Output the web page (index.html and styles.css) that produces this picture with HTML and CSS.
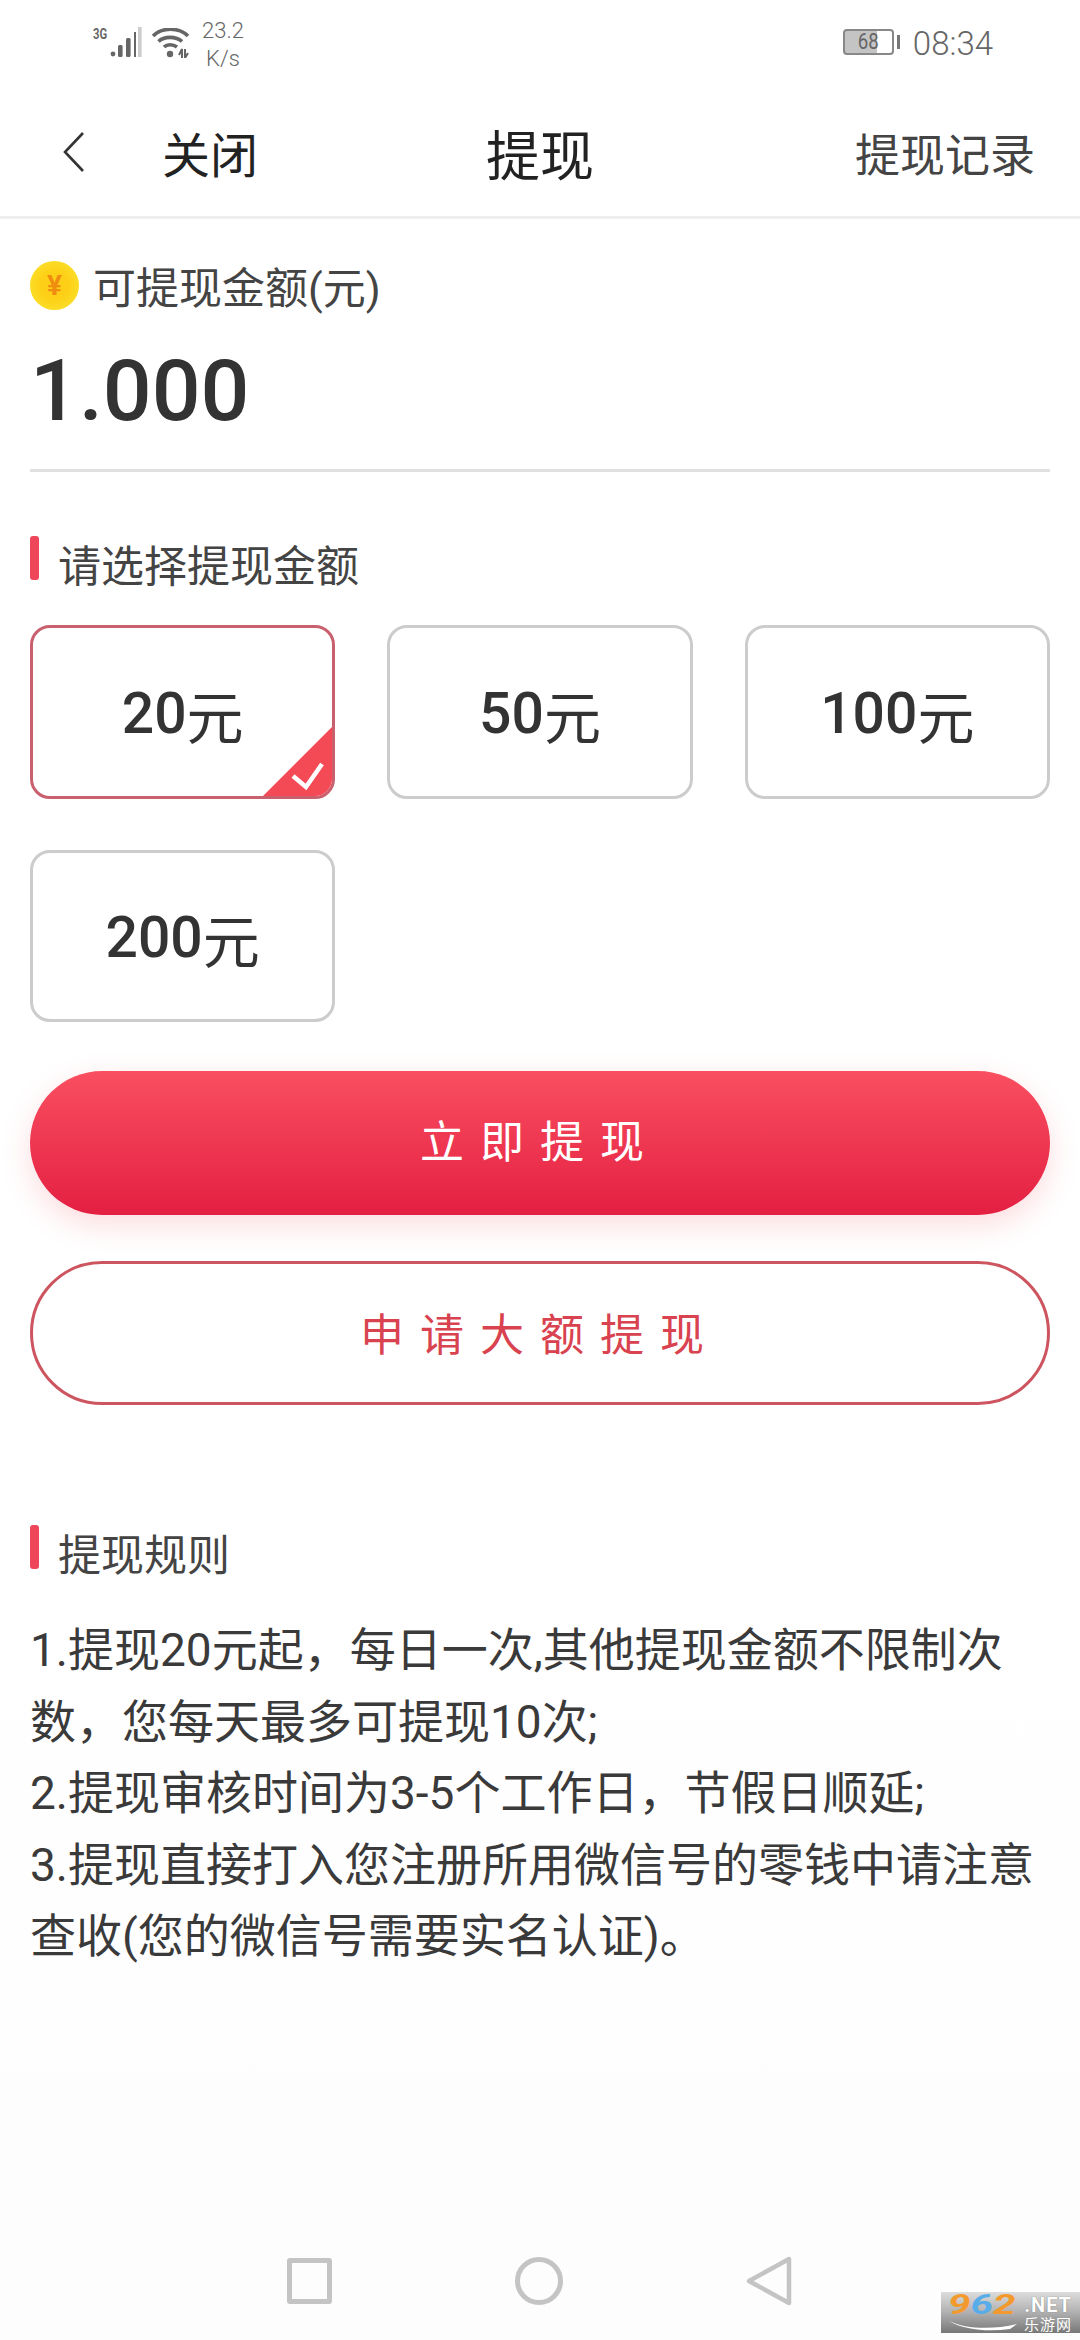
FILE: index.html
```html
<!DOCTYPE html>
<html lang="zh-CN">
<head>
    <meta charset="UTF-8">
    <meta name="viewport" content="width=device-width, initial-scale=1.0">
    <title>提现</title>
    <link rel="stylesheet" href="styles.css">
</head>
<body>

<div class="page">
    <div class="status-bar">
        <div class="status-left">
            <span class="net-type">3G</span>
            <svg class="signal" width="32" height="30" viewBox="0 0 32 30">
                <circle cx="3" cy="27" r="2.4" fill="#666"/>
                <rect x="8" y="18" width="4.6" height="12" rx="1.5" fill="#666"/>
                <rect x="16" y="11" width="4.6" height="19" rx="1.5" fill="#666"/>
                <rect x="24" y="5" width="2" height="25" fill="#666"/>
                <rect x="28" y="0" width="3.6" height="30" fill="#ccc"/>
            </svg>
            <svg class="wifi" width="38" height="30" viewBox="0 0 38 30">
                <path d="M1 8 C10 -1 27 -1 36 8" fill="none" stroke="#666" stroke-width="3.6"/>
                <path d="M6.5 13.5 C12 8 24 8 30 13.5" fill="none" stroke="#666" stroke-width="3.6"/>
                <path d="M12 19 C15 16 21 16 25 19" fill="none" stroke="#666" stroke-width="3.6"/>
                <circle cx="18" cy="26" r="3.2" fill="#666"/>
                <path d="M27 27 L30 21 V30 M33 21 V30 L36 25" fill="none" stroke="#666" stroke-width="2"/>
            </svg>
            <div class="speed">
                <span>23.2</span>
                <span>K/s</span>
            </div>
        </div>
        <div class="status-right">
            <div class="battery"><span class="battery-text">68</span></div>
            <span class="battery-nub"></span>
            <span class="time">08:34</span>
        </div>
    </div>

    <div class="header">
        <div class="header-left">
            <svg class="back" width="22" height="40" viewBox="0 0 22 40">
                <path d="M20 1 L2 20 L20 39" fill="none" stroke="#333" stroke-width="2.6"/>
            </svg>
            <span class="close">关闭</span>
        </div>
        <div class="title">提现</div>
        <div class="records">提现记录</div>
    </div>

    <div class="content">
        <div class="balance-label">
            <span class="coin">¥</span>
            <span>可提现金额(元)</span>
        </div>
        <div class="balance">1.000</div>

        <div class="section-title first">
            <span class="mark"></span>
            <span class="section-text">请选择提现金额</span>
        </div>

        <div class="options">
            <div class="option selected">
                20<span class="yuan">元</span>
                <svg class="tick" width="75" height="75" viewBox="0 0 75 75">
                    <path d="M75 0 V57 Q75 75 57 75 H0 Z" fill="#f44a55"/>
                    <path d="M33 52 L46 63 L62 40" fill="none" stroke="#fff" stroke-width="4.5"/>
                </svg>
            </div>
            <div class="option">50<span class="yuan">元</span></div>
            <div class="option">100<span class="yuan">元</span></div>
            <div class="option">200<span class="yuan">元</span></div>
        </div>

        <button class="btn btn-primary">立即提现</button>
        <button class="btn btn-outline">申请大额提现</button>

        <div class="section-title rules-title">
            <span class="mark"></span>
            <span class="section-text">提现规则</span>
        </div>
        <div class="rules">
            <p>1.提现20元起，每日一次,其他提现金额不限制次数，您每天最多可提现10次;</p>
            <p>2.提现审核时间为3-5个工作日，节假日顺延;</p>
            <p>3.提现直接打入您注册所用微信号的零钱中请注意查收(您的微信号需要实名认证)。</p>
        </div>
    </div>

    <div class="nav-bar">
        <span class="nav-square"></span>
        <span class="nav-circle"></span>
        <svg width="46" height="50" viewBox="0 0 46 50">
            <path d="M43 3 V47 L3 25 Z" fill="none" stroke="#c4c4c4" stroke-width="4.5" stroke-linejoin="round"/>
        </svg>
    </div>

    <div class="watermark">
        <div class="wm-left">
            <span class="wm-num"><span class="wm-orange">9</span><span class="wm-blue">6</span><span class="wm-orange">2</span></span>
            <svg class="wm-swoosh" width="70" height="12" viewBox="0 0 70 12">
                <path d="M1 1 C18 9 44 10 69 4 L62 9 C40 12 16 10 1 1 Z" fill="#fff"/>
            </svg>
        </div>
        <div class="wm-right">
            <span class="wm-net">.NET</span>
            <span class="wm-site">乐游网</span>
        </div>
    </div>
</div>

</body>
</html>
```

FILE: styles.css
```css
* {
    box-sizing: border-box;
}
body {
    margin: 0;
    font-family: Roboto, "Noto Sans CJK SC", sans-serif;
    background-color: #fff;
    color: #333;
}
.page {
    position: relative;
    width: 1080px;
    height: 2340px;
    overflow: hidden;
    display: flex;
    flex-direction: column;
    background: linear-gradient(#fff 60%, #fefdfe);
}

/* status bar */
.status-bar {
    height: 72px;
    padding: 17px 87px 0 93px;
    display: flex;
    justify-content: space-between;
    align-items: flex-start;
    color: #666;
}
.status-left {
    display: flex;
    align-items: flex-start;
}
.net-type {
    margin-top: 9px;
    width: 17px;
    font-size: 15px;
    line-height: 16px;
    font-weight: 700;
    transform: scaleX(0.75);
    transform-origin: left;
}
.signal {
    margin-top: 10px;
}
.wifi {
    margin-top: 11px;
    margin-left: 10px;
}
.speed {
    margin-left: 10px;
    width: 46px;
    display: flex;
    flex-direction: column;
    align-items: center;
    font-size: 22px;
    line-height: 28px;
    font-weight: 300;
}
.status-right {
    display: flex;
    align-items: flex-start;
}
.battery {
    margin-top: 12px;
    width: 51px;
    height: 26px;
    border: 2px solid #888;
    border-radius: 4px;
    background: linear-gradient(to right, #c4c4c4 68%, #fff 68%);
    display: flex;
    align-items: center;
    justify-content: center;
}
.battery-text {
    font-size: 22px;
    line-height: 22px;
    transform: scaleX(0.85);
}
.battery-nub {
    margin: 18px 0 0 3px;
    width: 3px;
    height: 14px;
    background-color: #777;
}
.time {
    margin: 9px 0 0 13px;
    font-size: 33px;
    line-height: 36px;
    font-weight: 300;
}

/* header */
.header {
    height: 147px;
    padding: 16px 45px 0 45px;
    display: grid;
    grid-template-columns: 1fr auto 1fr;
    align-items: center;
    border-bottom: 3px solid #eee;
}
.header-left {
    display: flex;
    align-items: center;
    padding-left: 18px;
}
.close {
    margin-left: 77px;
    font-size: 48px;
    color: #222;
}
.title {
    font-size: 54px;
    color: #222;
}
.records {
    text-align: right;
    font-size: 45px;
    color: #444;
}

/* content */
.content {
    padding: 0 30px;
}
.balance-label {
    margin-top: 36px;
    display: flex;
    align-items: center;
    height: 60px;
    font-size: 43px;
    color: #444;
}
.coin {
    width: 49px;
    height: 49px;
    margin-right: 14px;
    border-radius: 50%;
    background: radial-gradient(circle, #fdd017 40%, #fbe02a 80%, #f6e96a);
    color: #f08c10;
    font-size: 28px;
    font-weight: 700;
    line-height: 49px;
    text-align: center;
}
.balance {
    margin-top: 27px;
    height: 130px;
    border-bottom: 3px solid #e0e0e0;
    font-size: 86px;
    line-height: 98px;
    font-weight: 500;
}
.section-title {
    display: flex;
    align-items: flex-start;
}
.section-title.first {
    margin-top: 64px;
}
.mark {
    width: 9px;
    height: 44px;
    border-radius: 3px;
    background-color: #f0465a;
}
.section-text {
    margin: 6px 0 0 19px;
    font-size: 43px;
    line-height: 50px;
    color: #444;
}
.options {
    margin-top: 33px;
    display: grid;
    grid-template-columns: repeat(3, 1fr);
    grid-template-rows: 174px 172px;
    column-gap: 52px;
    row-gap: 51px;
}
.option {
    position: relative;
    padding-top: 3px;
    border: 3px solid #ccc;
    border-radius: 20px;
    display: flex;
    align-items: center;
    justify-content: center;
    font-size: 57px;
    font-weight: 500;
    overflow: hidden;
}
.option.selected {
    border-color: #c9606e;
}
.yuan {
    font-weight: 400;
}
.tick {
    position: absolute;
    right: -3px;
    bottom: -3px;
}
.btn {
    display: block;
    width: 100%;
    height: 144px;
    border-radius: 72px;
    font-family: inherit;
    font-size: 44px;
    letter-spacing: 16px;
}
.btn-primary {
    margin-top: 49px;
    padding: 0 0 9px;
    border: none;
    background: linear-gradient(#f94f60, #e41f42);
    box-shadow: 0 10px 30px rgba(240, 60, 80, 0.18);
    color: #fff;
}
.btn-outline {
    margin-top: 46px;
    padding: 0 0 3px;
    border: 3px solid #cc5560;
    background-color: #fff;
    color: #d9424f;
}
.rules-title {
    margin-top: 120px;
}
.rules {
    margin-top: 34px;
    font-size: 46px;
    line-height: 71.5px;
    color: #3a3a3a;
}
.rules p {
    margin: 0;
}

/* bottom nav */
.nav-bar {
    position: absolute;
    left: 287px;
    top: 2256px;
    width: 505px;
    display: flex;
    justify-content: space-between;
    align-items: center;
}
.nav-square {
    width: 45px;
    height: 46px;
    border: 5px solid #c4c4c4;
    border-radius: 3px;
}
.nav-circle {
    width: 48px;
    height: 48px;
    border: 5px solid #c4c4c4;
    border-radius: 50%;
}

/* watermark */
.watermark {
    position: absolute;
    right: 0;
    bottom: 7px;
    width: 139px;
    height: 41px;
    padding: 0 8px 0 7px;
    background: linear-gradient(#dcdcdc, #b0b0b0 50%, #777);
    display: flex;
    justify-content: space-between;
    font-weight: 700;
    line-height: 1;
}
.wm-left {
    width: 72px;
    display: flex;
    flex-direction: column;
}
.wm-num {
    height: 27px;
    font-size: 27px;
    line-height: 27px;
    font-style: italic;
    transform: scaleX(1.5);
    transform-origin: left;
    white-space: nowrap;
}
.wm-orange {
    color: #f29a2e;
}
.wm-blue {
    color: #58ade8;
}
.wm-swoosh {
    margin-top: 1px;
}
.wm-right {
    display: flex;
    flex-direction: column;
    align-items: flex-end;
    padding-top: 3px;
    color: #fff;
}
.wm-net {
    font-size: 20px;
    line-height: 21px;
    letter-spacing: 1px;
    text-shadow: 0 0 1px #666;
}
.wm-site {
    margin-top: 1px;
    font-size: 15px;
    line-height: 16px;
    font-weight: 400;
    letter-spacing: 1px;
    white-space: nowrap;
}
```
